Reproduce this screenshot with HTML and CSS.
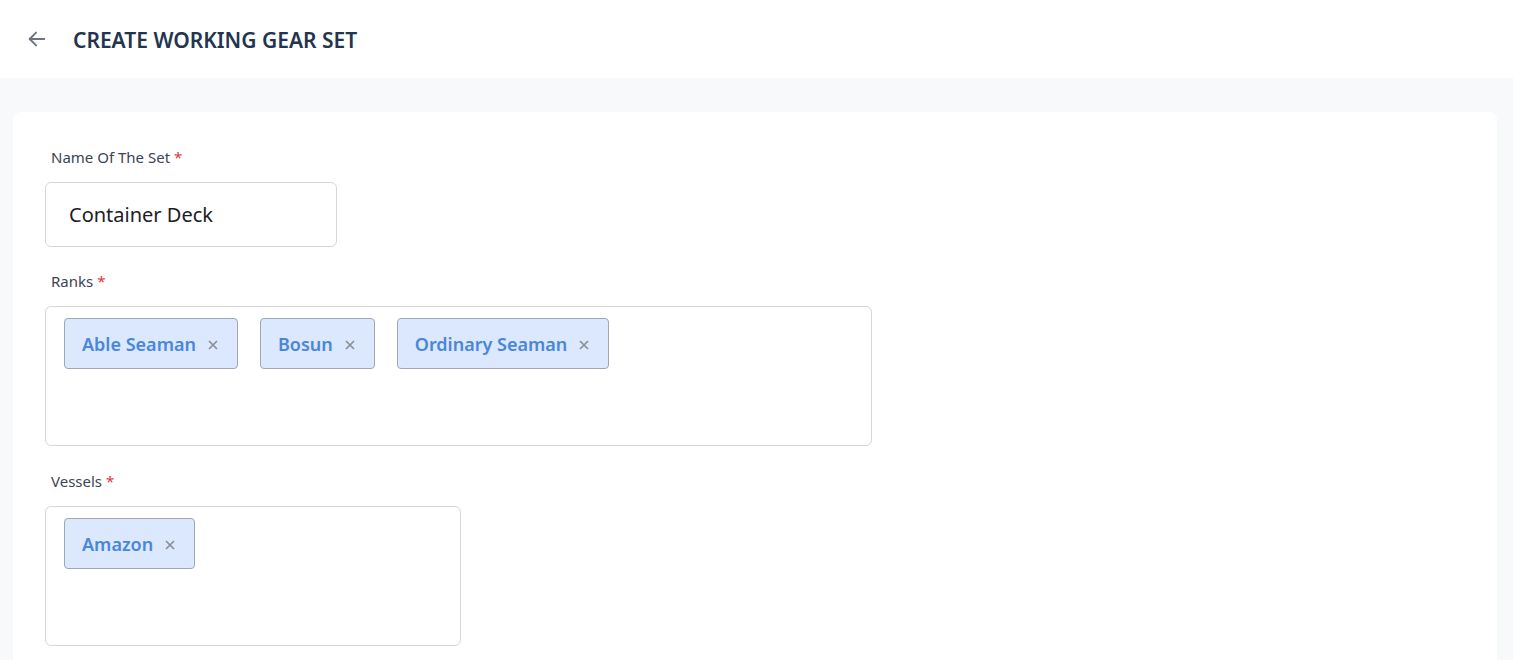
FILE: index.html
```html
<!DOCTYPE html>
<html>
<head>
<meta charset="utf-8">
<link rel="stylesheet" href="styles.css">
</head>
<body>
<header class="topbar">
  <button class="back" aria-label="Back">
    <svg width="22" height="22" viewBox="0 0 24 24" fill="none" stroke="#6b7280" stroke-width="2" stroke-linecap="round" stroke-linejoin="round"><path d="M20 12H4"/><path d="M11 5l-7 7 7 7"/></svg>
  </button>
  <h1 class="title">CREATE WORKING GEAR SET</h1>
</header>
<main class="page">
  <section class="card">
    <div class="field">
      <label class="label">Name Of The Set <span class="req">*</span></label>
      <div class="input name-input">Container Deck</div>
    </div>
    <div class="field">
      <label class="label">Ranks <span class="req">*</span></label>
      <div class="tagbox ranks">
        <span class="chip">Able Seaman <svg class="x" width="10" height="10" viewBox="0 0 10 10"><path d="M1 1L9 9M9 1L1 9"/></svg></span>
        <span class="chip">Bosun <svg class="x" width="10" height="10" viewBox="0 0 10 10"><path d="M1 1L9 9M9 1L1 9"/></svg></span>
        <span class="chip">Ordinary Seaman <svg class="x" width="10" height="10" viewBox="0 0 10 10"><path d="M1 1L9 9M9 1L1 9"/></svg></span>
      </div>
    </div>
    <div class="field vessels-field">
      <label class="label">Vessels <span class="req">*</span></label>
      <div class="tagbox vessels">
        <span class="chip">Amazon <svg class="x" width="10" height="10" viewBox="0 0 10 10"><path d="M1 1L9 9M9 1L1 9"/></svg></span>
      </div>
    </div>
  </section>
</main>
</body>
</html>
```
FILE: styles.css
```css
* { box-sizing: border-box; }
html, body { margin: 0; padding: 0; }
body {
  font-family: "Noto Sans", "Open Sans", sans-serif;
  background: #f8f9fb;
  color: #1f2937;
  height: 660px;
  overflow: hidden;
}
.topbar {
  height: 78px;
  background: #ffffff;
  display: flex;
  align-items: center;
  padding-left: 26px;
}
.back {
  background: none;
  border: 0;
  padding: 0;
  width: 22px;
  height: 22px;
  display: flex;
  align-items: center;
  justify-content: center;
  margin-right: 25px;
  cursor: pointer;
}
.title {
  margin: 0;
  font-size: 21px;
  font-weight: 600;
  color: #23344f;
  letter-spacing: 0;
  line-height: 1;
  padding-top: 2px;
}
.page {
  padding: 34px 16px 0 13px;
}
.card {
  background: #ffffff;
  border-radius: 8px;
  padding: 35px 32px 0 32px;
  display: flex;
  flex-direction: column;
  gap: 24px;
  height: 620px;
  overflow: hidden;
}
.field {
  display: flex;
  flex-direction: column;
  gap: 15px;
  align-items: flex-start;
}
.vessels-field { margin-top: 1px; }
.label {
  font-size: 15px;
  line-height: 20px;
  color: #3b4453;
  padding-left: 6px;
}
.req { color: #e0353b; }
.input {
  border: 1px solid #d6d6da;
  border-radius: 6px;
  background: #fff;
}
.name-input {
  width: 292px;
  height: 65px;
  display: flex;
  align-items: center;
  padding-left: 23px;
  font-size: 20px;
  color: #1c2025;
}
.tagbox {
  border: 1px solid #d6d6da;
  border-radius: 6px;
  background: #fff;
  height: 140px;
  padding: 11px 18px;
  display: flex;
  flex-wrap: wrap;
  align-content: flex-start;
  gap: 22px;
  flex-shrink: 0;
}
.ranks { width: 827px; }
.vessels { width: 416px; }
.chip {
  height: 51px;
  display: inline-flex;
  align-items: center;
  background: #dbe8fd;
  border: 1px solid #a0a7b2;
  border-radius: 4px;
  padding: 0 19px 0 17px;
  font-size: 18px;
  font-weight: 600;
  color: #4a86d9;
}
.x {
  margin-left: 12px;
  stroke: #8b8f97;
  stroke-width: 1.7;
  fill: none;
  margin-top: 2px;
}
```
